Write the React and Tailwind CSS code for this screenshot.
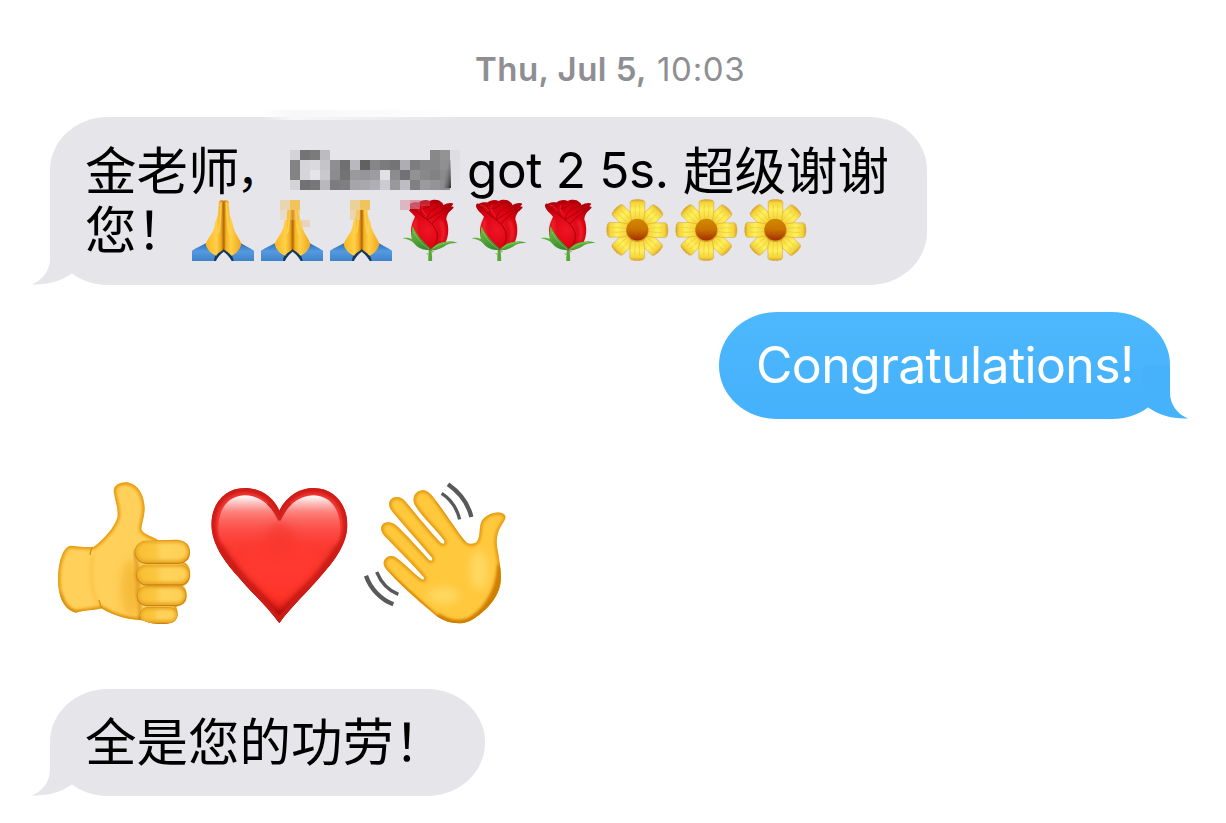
import React from "react";

const EMOJI = "block h-[62px] w-[62px] shrink-0 overflow-visible";

// Shared gradients and filters for the emoji drawings
function Defs() {
  return (
    <svg className="absolute h-0 w-0" aria-hidden="true">
      <defs>
        <filter id="b2" x="-20%" y="-20%" width="140%" height="140%"><feGaussianBlur stdDeviation="2" /></filter>
        <filter id="b5" x="-30%" y="-30%" width="160%" height="160%"><feGaussianBlur stdDeviation="5" /></filter>
        <filter id="b12" x="-60%" y="-60%" width="220%" height="220%"><feGaussianBlur stdDeviation="12" /></filter>
        <linearGradient id="sleeve" x1="0" y1="0" x2="0" y2="1">
          <stop offset="0" stopColor="#2a6fb8" /><stop offset=".45" stopColor="#5599e0" /><stop offset="1" stopColor="#3f83cb" />
        </linearGradient>
        <linearGradient id="palmL" x1="0" y1="0" x2="1" y2="0">
          <stop offset="0" stopColor="#fbb51e" /><stop offset=".6" stopColor="#ffd04a" /><stop offset=".85" stopColor="#f2ac1c" /><stop offset="1" stopColor="#b96b08" />
        </linearGradient>
        <linearGradient id="palmR" x1="1" y1="0" x2="0" y2="0">
          <stop offset="0" stopColor="#f0a51a" /><stop offset=".6" stopColor="#ffd04a" /><stop offset=".85" stopColor="#f6b422" /><stop offset="1" stopColor="#c87a0b" />
        </linearGradient>
        <radialGradient id="rose" cx=".45" cy=".6" r=".6">
          <stop offset="0" stopColor="#ef1524" /><stop offset=".7" stopColor="#d9000f" /><stop offset="1" stopColor="#b5000b" />
        </radialGradient>
        <linearGradient id="leaf" x1="0" y1="0" x2="1" y2="1">
          <stop offset="0" stopColor="#7ac943" /><stop offset="1" stopColor="#2f7f2c" />
        </linearGradient>
        <linearGradient id="petal" x1="0" y1="0" x2="0" y2="1">
          <stop offset="0" stopColor="#dba126" /><stop offset=".13" stopColor="#f3d43c" /><stop offset=".4" stopColor="#fff05a" /><stop offset="1" stopColor="#f0c62c" />
        </linearGradient>
        <linearGradient id="core" x1="0" y1="0" x2="0" y2="1">
          <stop offset="0" stopColor="#d18a00" /><stop offset=".5" stopColor="#c97100" /><stop offset="1" stopColor="#a52f00" />
        </linearGradient>
        <linearGradient id="finger" x1="0" y1="0" x2="1" y2="0">
          <stop offset="0" stopColor="#f8bf35" /><stop offset=".35" stopColor="#fbc63e" /><stop offset=".5" stopColor="#ffd35c" /><stop offset="1" stopColor="#ffcf55" />
        </linearGradient>
        <linearGradient id="heart" x1="0" y1="0" x2="0" y2="1">
          <stop offset="0" stopColor="#f03a36" /><stop offset=".3" stopColor="#fb3b34" /><stop offset=".8" stopColor="#ff3428" /><stop offset="1" stopColor="#d31410" />
        </linearGradient>
        <linearGradient id="gloss" x1="0" y1="0" x2="0" y2="1">
          <stop offset="0" stopColor="#fff" /><stop offset=".08" stopColor="#ffe2e0" stopOpacity=".95" /><stop offset=".3" stopColor="#ff9f9a" stopOpacity=".65" /><stop offset=".6" stopColor="#ff756e" stopOpacity=".3" /><stop offset="1" stopColor="#ff3a30" stopOpacity="0" />
        </linearGradient>
        <clipPath id="thumbClip"><path d={THUMB} /></clipPath>
        <clipPath id="waveClip"><path d={WAVE} /></clipPath>
        <clipPath id="heartClip"><path d={HEART} /></clipPath>
      </defs>
    </svg>
  );
}

function Pray() {
  return (
    <svg className={EMOJI} viewBox="36 27 186 186">
      <path d="M36 182C50 173 65 167 77 160L108 192L122 181L131 174L140 181L154 192L183 160C195 167 208 173 222 182V213H158C153 204 143 193 131 183C120 193 110 204 104 213H36Z" fill="url(#sleeve)" />
      <path d="M131 174L112 186C107 194 103 202 102 213H108C112 203 121 192 131 185C141 192 150 203 155 213H161C159 202 155 194 150 186Z" fill="#17375c" />
      <path d="M131 32C126 28 118 29 117 36L114 72C111 88 106 90 104 107C100 130 84 142 77 162C80 177 94 194 109 197C113 188 127 183 131 177Z" fill="url(#palmL)" />
      <path d="M131 32C137 28 145 29 146 36L149 72C152 88 157 90 159 107C164 130 178 142 184 162C181 177 168 194 154 197C149 188 136 183 131 177Z" fill="url(#palmR)" />
      <path d="M124 36C121 70 123 100 115 130M139 36C142 70 140 100 149 130" stroke="#ffe070" strokeWidth="5" fill="none" opacity=".55" filter="url(#b2)" />
      <path d="M131.500 34V176" stroke="#a85f0a" strokeWidth="3" />
      <path d="M118 38C119 33 125 33 126 38M136 38C138 33 144 33 145 38" stroke="#d88e12" strokeWidth="2" fill="none" />
    </svg>
  );
}

function Rose() {
  return (
    <svg className={EMOJI} viewBox="12 27 186 186">
      <path d="M100 170C103 186 99 198 100 213H111C113 198 107 186 112 170Z" fill="#55a832" />
      <path d="M99 194L96 190M112 187L115 183" stroke="#4b9b2c" strokeWidth="3" />
      <path d="M44 42C50 36 66 36 70 38C78 30 94 27 104 33C112 28 132 27 138 36C144 39 145 43 145 46C157 38 171 38 175 42L168 50C176 48 178 52 173 56C160 66 155 76 154 88C164 115 160 142 151 158C141 174 123 183 105 180C76 176 47 156 48 124C49 100 55 93 60 80C49 66 36 58 36 47C37 40 42 40 44 42Z" fill="url(#rose)" />
      <path d="M41 46C55 54 63 66 84 80C110 98 128 118 127 140C127 158 116 172 107 178" stroke="#a1000a" strokeWidth="3" fill="none" />
      <path d="M70 38C68 58 79 75 96 90M96 90C98 68 113 54 145 46M96 90C122 74 139 60 168 50M110 102C127 82 146 68 169 59" stroke="#a90009" strokeWidth="3" fill="none" />
      <path d="M78 40C86 36 97 36 101 43M109 39C117 34 128 36 131 42M80 56C92 57 102 51 109 44" stroke="#a0000b" strokeWidth="3" fill="none" />
      <path d="M62 88C58 106 58 124 66 144M136 92C148 112 148 138 140 154" stroke="#ff4b4e" strokeWidth="9" fill="none" opacity=".5" filter="url(#b5)" />
      <path d="M84 45C77 58 86 68 94 76M49 45C60 45 66 55 75 62" stroke="#f6434c" strokeWidth="3" fill="none" opacity=".6" filter="url(#b2)" />
      <path d="M53 108C62 134 89 160 110 178C91 185 66 174 57 160C49 151 37 148 23 145C34 142 42 144 50 147C48 134 50 120 53 108Z" fill="url(#leaf)" />
      <path d="M106 179C119 164 136 156 151 155C165 152 177 153 190 160C175 158 164 161 154 165C141 176 122 182 106 179Z" fill="url(#leaf)" />
      <path d="M57 125C66 149 84 164 103 177M115 174C130 164 148 158 166 157" stroke="#a2e268" strokeWidth="2" fill="none" opacity=".7" />
    </svg>
  );
}

const PETAL = "M91 45C88 36 93 29 101 30Q107 27 112 29Q118 27 124 30C132 29 137 36 134 45C135 66 135 80 126 104H99C90 80 90 66 91 45Z";

function Flower() {
  return (
    <svg className={EMOJI} viewBox="18 27 186 186">
      {[45, 135, 225, 315, 0, 90, 180, 270].map((a) => (
        <g key={a} transform={`rotate(${a} 112 120)`}>
          <path d={PETAL} fill="url(#petal)" stroke="#cf9a2a" strokeWidth="1.500" />
          <path d="M106 44C104 60 106 74 108 88M119 44C121 60 118 74 116 88" stroke="#dcb030" strokeWidth="2" fill="none" opacity=".6" />
        </g>
      ))}
      <circle cx="112" cy="122" r="34" fill="#b36c00" opacity=".45" filter="url(#b2)" />
      <circle cx="112" cy="119" r="32.500" fill="url(#core)" />
      <path d="M94 108h1M104 98h1M115 105h1M127 101h1M132 117h1M119 117h1M105 115h1M97 124h1M110 131h1M124 129h1" stroke="#e3a01b" strokeWidth="3" opacity=".55" />
    </svg>
  );
}

const THUMB =
  "M222 84C217 62 238 51 262 52C295 58 312 90 314 128C314 155 305 175 304 193C311 210 335 213 355 226L410 224C440 226 452 245 450 265C449 280 443 288 432 292C450 300 454 325 449 340C445 355 438 360 428 363C440 370 443 390 438 405C433 418 422 422 408 425C416 440 415 460 402 470C380 482 330 478 308 466C260 464 215 450 185 430C160 436 130 436 108 443C70 435 54 390 54 345C54 300 65 250 90 242C115 245 140 247 160 246C190 225 225 185 233 155C234 125 226 110 222 84Z";

function ThumbsUp() {
  const fingers = [
    [284, 227, 165, 70],
    [288, 299, 162, 63],
    [290, 363, 149, 61],
    [298, 427, 116, 50],
  ];
  return (
    <svg className="block h-[175px] w-[160px] shrink-0" viewBox="0 0 480 525">
      <path d={THUMB} fill="#ffd05a" />
      <g clipPath="url(#thumbClip)">
        <ellipse cx="275" cy="370" rx="32" ry="85" fill="#efa71c" opacity=".5" filter="url(#b12)" />
        <path d="M160 270C148 320 152 385 182 430" stroke="#f2ab1c" strokeWidth="8" fill="none" opacity=".35" filter="url(#b5)" />
        <path d={THUMB} fill="none" stroke="#e69a0c" strokeWidth="14" filter="url(#b5)" />
        <path d="M60 385C80 450 110 450 185 432C220 455 260 466 310 468" stroke="#ca7b06" strokeWidth="8" fill="none" opacity=".6" filter="url(#b5)" />
        <path d="M158 246C153 252 151 262 150 270M177 405C179 415 182 424 188 432" stroke="#d8900f" strokeWidth="4" fill="none" filter="url(#b2)" />
        <path d="M285 255C280 285 296 294 291 312C284 335 298 350 294 370C288 395 300 405 299 425V470" stroke="#cb810b" strokeWidth="8" fill="none" opacity=".7" filter="url(#b5)" />
        {fingers.map(([x, y, w, h]) => (
          <g key={y}>
            <rect x={x} y={y} width={w} height={h} rx={h / 2} fill="#c98110" />
            <rect x={x + 2} y={y + 1} width={w - 4} height={h - 5} rx={(h - 5) / 2} fill="#ebaa27" filter="url(#b2)" />
            <rect x={x + 8} y={y + 7} width={w - 16} height={h - 19} rx={(h - 19) / 2} fill="url(#finger)" filter="url(#b5)" />
          </g>
        ))}
      </g>
    </svg>
  );
}

const HEART =
  "M238 137C218 92 178 69 134 69C75 69 34 115 34 180C36 240 75 290 110 330C150 378 200 422 238 474C276 422 325 378 365 330C405 285 442 235 442 180C442 115 400 69 341 69C300 69 260 92 238 137Z";

function Heart() {
  return (
    <svg className="block h-[175px] w-[155px] shrink-0" viewBox="0 0 465 525">
      <path d={HEART} fill="url(#heart)" />
      <g clipPath="url(#heartClip)">
        <path d="M45 250C75 320 175 400 238 476C300 400 405 320 430 250" fill="none" stroke="#8d0503" strokeWidth="36" filter="url(#b12)" />
        <path d={HEART} fill="none" stroke="#cf1d19" strokeWidth="28" filter="url(#b5)" />
        <path d="M56 205C50 145 76 93 134 91C185 92 217 127 238 166C260 127 291 92 341 91C399 93 425 145 420 205C415 260 350 270 238 270C126 270 61 260 56 205Z" fill="url(#gloss)" filter="url(#b2)" />
        <ellipse cx="239" cy="295" rx="110" ry="75" fill="#ff3a30" opacity=".6" filter="url(#b12)" />
        <ellipse cx="239" cy="220" rx="40" ry="45" fill="#f5382f" opacity=".6" filter="url(#b12)" />
        <path d="M238 166C229 147 218 129 203 115M238 166C248 147 257 129 272 115" stroke="#d42420" strokeWidth="7" fill="none" filter="url(#b2)" />
      </g>
    </svg>
  );
}

const WAVE =
  "M178 117C168 90 190 70 212 77C225 82 235 95 245 110C275 150 310 205 332 230C345 241 365 238 370 222C376 205 372 185 380 168C392 148 425 135 446 147C460 158 445 170 437 185C425 205 423 230 427 250C432 280 440 320 437 350C432 400 390 440 350 465C320 482 280 476 250 457C210 425 140 365 105 325C95 315 85 305 86 293C88 275 108 268 122 277C145 292 180 330 200 343C207 346 209 342 206 336C180 305 120 245 88 212C75 198 75 182 88 174C100 168 115 173 125 182C155 210 195 255 222 285C230 291 235 285 230 277C200 240 145 180 112 140C100 125 98 108 113 99C127 92 142 98 152 110C185 150 225 200 257 233C265 240 272 235 267 226C240 190 200 155 178 117Z";

function Wave() {
  return (
    <svg className="block h-[175px] w-[165px] shrink-0" viewBox="0 0 495 525">
      <g fill="none" stroke="#58595b">
        <path d="M279 58C313 82 340 117 349 156" strokeWidth="13" />
        <path d="M260 85C286 102 306 131 314 163" strokeWidth="10" />
        <path d="M33 332C47 372 78 404 115 418" strokeWidth="13" />
        <path d="M65 321C77 350 99 376 130 388" strokeWidth="10" />
      </g>
      <path d={WAVE} fill="#ffc83d" />
      <g clipPath="url(#waveClip)">
        <ellipse cx="372" cy="315" rx="28" ry="60" fill="#ffdc69" opacity=".8" filter="url(#b12)" />
        <ellipse cx="265" cy="392" rx="50" ry="25" fill="#ffdc69" opacity=".8" filter="url(#b12)" />
        <path d={WAVE} fill="none" stroke="#e3960d" strokeWidth="12" filter="url(#b5)" />
        <path d="M439 300C432 400 380 452 340 472C310 482 280 478 245 456" fill="none" stroke="#cf7e05" strokeWidth="24" filter="url(#b5)" />
        <path d="M250 457L105 325M332 230L245 110" fill="none" stroke="#d78a0c" strokeWidth="6" opacity=".6" filter="url(#b2)" />
      </g>
    </svg>
  );
}

const MOSAIC = [
  "#d3d3d8 #747476 #7b7b7c #bbbbc0 - - - - - - - - - - #888889 #939394 #dddde2",
  "#838384 #d5d5da #d9d9de #c4c4c9 #8f8f92 #707072 #b8b8be #616162 #868689 #7b7b7d #747476 #adadb3 #7d7d7f #868688 #868688 #909092 #dfdfe4",
  "#838384 #d5d5da #e4e4e9 #c8c8cd #8c8c8e #737375 #9a9a9d #969699 #9d9da1 #e0e0e5 #8c8c8e #727274 #929295 #888889 #828284 #8a8a8c #e1e1e6",
  "#d3d3d8 #727274 #777779 #b8b8bd #7c7c7e #7f7f81 #a5a5aa #a8a8ad #afafb5 #cbcbd1 #99999c #bdbdc3 #808083 #9a9a9f #949498 #8d8d90 #e3e3e8",
].map((row) => row.split(" "));

// Pixelated block that hides the student's name
function HiddenName() {
  return (
    <svg className="mt-[1px] block h-10 w-[178px] shrink-0" viewBox="0 0 178 40" shapeRendering="crispEdges">
      {MOSAIC.flatMap((row, r) =>
        row.map((c, i) => (c === "-" ? null : <rect key={`${r}-${i}`} x={i * 10} y={r * 10} width="10" height="10" fill={c} />))
      )}
      <defs>
        <linearGradient id="edge" x1="0" y1="0" x2="1" y2="1"><stop offset=".3" stopColor="#777" stopOpacity="0" /><stop offset="1" stopColor="#222" /></linearGradient>
      </defs>
      <rect x="154" y="10" width="7" height="28" fill="url(#edge)" />
    </svg>
  );
}

function Tail({ right = false, color }) {
  return (
    <svg
      className={right ? "absolute -right-[18px] bottom-0 h-[60px] w-[60px] -scale-x-100" : "absolute bottom-0 -left-[18px] h-[60px] w-[60px]"}
      viewBox="0 0 60 60"
    >
      <path d="M18 6V34C18 45 11 55 0 59.500C16 60 29 56 39 49L45 42V6Z" fill={color} />
    </svg>
  );
}

export default function App() {
  return (
    <main className="flex h-[823px] w-[1226px] flex-col overflow-hidden bg-white font-[Inter,'Noto_Sans_CJK_SC',sans-serif] text-black">
      <Defs />
      <header className="flex h-[117px] items-start pt-[49px] pl-[475px] text-[33px] leading-10 whitespace-nowrap text-[#8e8e93]">
        <span className="w-[182px] font-semibold tracking-[0.45px]">Thu, Jul 5,</span>
        <span className="tracking-[0.7px]">10:03</span>
      </header>

      <section className="relative ml-[50px] h-[168px] w-[877px] shrink-0 rounded-[58px/53px] bg-[#e5e5ea] pt-8 pl-9">
        <div className="absolute -top-[7px] left-[213px] h-[10px] w-[195px] bg-gradient-to-r from-transparent via-[#f7f7f9] via-15% to-transparent" />
        <Tail color="#e5e5ea" />
        <div className="relative flex h-[50px] text-[51.500px] leading-[37px] whitespace-nowrap">
          <span className="flex w-[204px] shrink-0 font-['Noto_Sans_CJK_SC',sans-serif]">
            <span className="-ml-px">金老师</span>
            <span className="-ml-[3px] text-[46px]">，</span>
          </span>
          <HiddenName />
          <span className="-ml-px w-[216px] shrink-0 text-[49.500px] leading-[42px] tracking-[-0.35px]">got 2 5s.</span>
          <span className="font-['Noto_Sans_CJK_SC',sans-serif]">超级谢谢</span>
        </div>
        <div className="relative flex h-[62px]">
          <span className="-ml-px w-[107px] shrink-0 font-['Noto_Sans_CJK_SC',sans-serif] text-[51.500px] leading-[56px] whitespace-nowrap">您！</span>
          <div className="relative flex gap-[7px]">
            <Pray /><Pray /><Pray />
            <Rose /><Rose /><Rose />
            <Flower /><Flower /><Flower />
            <svg className="absolute top-0 left-0 h-[62px] w-[270px]" viewBox="192 199 270 62" shapeRendering="crispEdges">
              <rect x="280" y="199" width="20" height="11" fill="#e5e5ea" />
              <path d="M280 200h10v10h-10z" fill="#e8d5b1" />
              <path d="M290 200h10v10h-10z" fill="#f1c35c" />
              <path d="M280 210h7v10h-7z" fill="#e7dccb" />
              <path d="M288 210h12v10h-12z" fill="#f3c45b" opacity=".45" />
              <path d="M301 220h9v7h-9z" fill="#e7cfa6" opacity=".7" />
              <rect x="349" y="199" width="21" height="11" fill="#e5e5ea" />
              <path d="M350 200h10v10h-10z" fill="#ead199" />
              <path d="M360 200h10v10h-10z" fill="#f1c35c" />
              <path d="M350 210h10v10h-10z" fill="#edcb86" opacity=".6" />
              <path d="M400 200h10v10h-10z" fill="#dcb6c0" />
              <path d="M410 200h10v9h-10z" fill="#d3788a" opacity=".7" />
              <path d="M420 200h10v6h-10z" fill="#d86f7d" opacity=".35" />
            </svg>
          </div>
        </div>
      </section>

      <section className="relative mt-[27px] ml-[719px] flex h-[107px] w-[451px] shrink-0 items-center rounded-[58px/53px] bg-gradient-to-b from-[#4db8fd] to-[#45b1fc] pl-[37px] text-[50px] tracking-[-0.68px] whitespace-nowrap text-white">
        <Tail right color="#46b2fc" />
        <span className="relative">Congratulations!</span>
      </section>

      <section className="mt-[46px] ml-10 flex h-[175px] shrink-0">
        <ThumbsUp />
        <Heart />
        <Wave />
      </section>

      <section className="relative mt-[49px] ml-[50px] flex h-[107px] w-[435px] shrink-0 items-center rounded-[58px/53px] bg-[#e5e5ea] pb-[7px] pl-[35px] font-['Noto_Sans_CJK_SC',sans-serif] text-[51.500px] whitespace-nowrap">
        <Tail color="#e5e5ea" />
        <span className="relative">全是您的功劳！</span>
      </section>
    </main>
  );
}
